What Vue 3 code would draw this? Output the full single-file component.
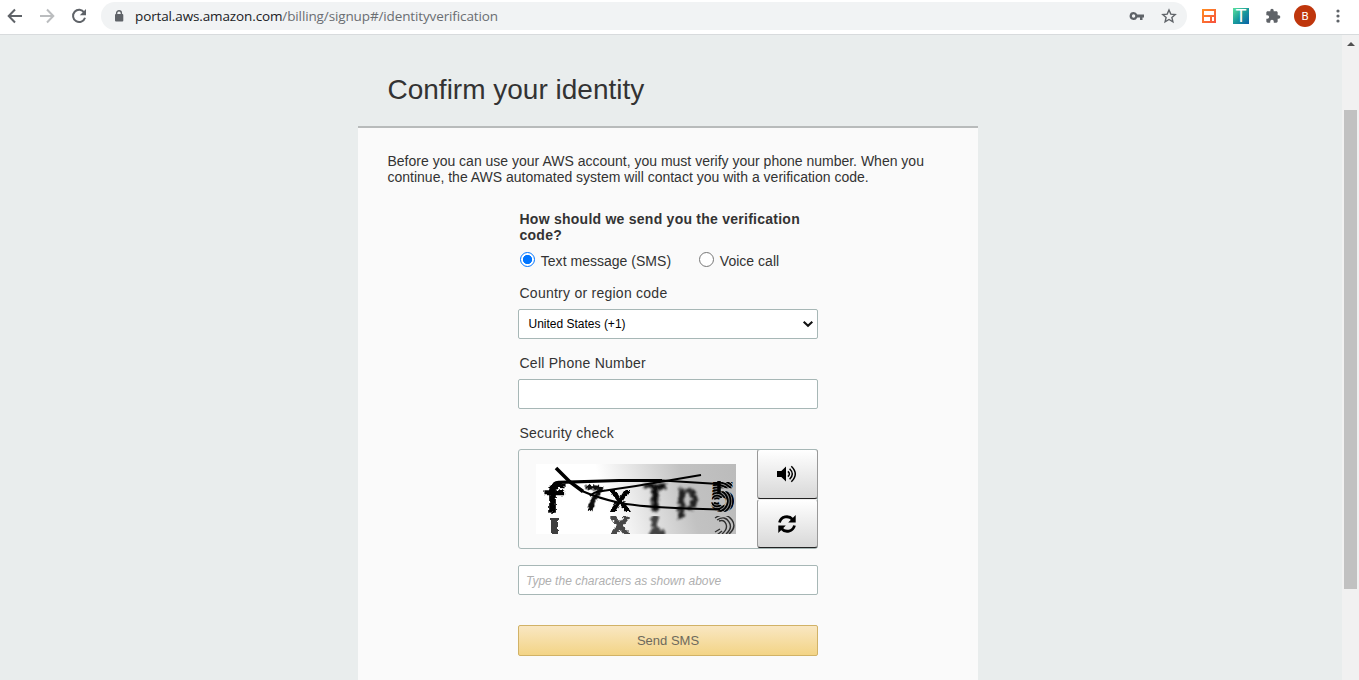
<script setup>
import { ref } from 'vue'

const method = ref('sms')
const country = ref('United States (+1)')
const phone = ref('')
const answer = ref('')
</script>

<template>
  <div class="browser">
    <header class="toolbar">
      <nav class="nav">
        <svg width="16" height="16" viewBox="0 0 16 16"><path d="M15 8H2M8 1.5L1.700 8L8 14.500" fill="none" stroke="#5f6368" stroke-width="2" /></svg>
        <svg width="16" height="16" viewBox="0 0 16 16"><path d="M1 8H14M8 1.500L14.300 8L8 14.500" fill="none" stroke="#bbbdbf" stroke-width="2" /></svg>
        <svg width="16" height="16" viewBox="0 0 16 16"><path d="M13.200 4.500A6.100 6.100 0 1 0 14 9.700" fill="none" stroke="#5f6368" stroke-width="2" /><path d="M15 1V7.200H8.800z" fill="#5f6368" /></svg>
      </nav>
      <div class="address">
        <svg class="lock" width="10" height="12" viewBox="0 0 10 12"><path d="M2.600 5V3.200a2.400 2.400 0 0 1 4.800 0V5" fill="none" stroke="#5f6368" stroke-width="1.400" /><rect x="1" y="4" width="8.300" height="7.500" rx="1" fill="#5f6368" /></svg>
        <span class="url"><b>portal.aws.amazon.com</b>/billing/signup#/identityverification</span>
        <svg class="key" width="16" height="12" viewBox="0 0 16 12"><path fill-rule="evenodd" d="M4.600 2A4 4 0 1 0 8.300 7.500H11V10H13.500V7.500H15V4.500H8.300A4 4 0 0 0 4.600 2zM4.600 4.300a1.700 1.700 0 1 1 0 3.400a1.700 1.700 0 0 1 0-3.400z" fill="#5f6368" /></svg>
        <svg class="star" width="16" height="16" viewBox="0 0 16 16"><path d="M8 2L9.800 6.100L14.200 6.500L10.900 9.400L11.900 13.800L8 11.500L4.100 13.800L5.100 9.400L1.800 6.500L6.200 6.100z" fill="none" stroke="#5f6368" stroke-width="1.400" /></svg>
      </div>
      <div class="extensions">
        <svg class="e1" width="14" height="14" viewBox="0 0 14 14"><defs><linearGradient id="og" x2="1" y2="1"><stop stop-color="#ff8f1f" /><stop offset="1" stop-color="#f75040" /></linearGradient></defs><path fill="url(#og)" fill-rule="evenodd" d="M0 0h14v14H0zM2 2v4h10V2zM2 8v4h6V8zM10 8v4h2V8z" /></svg>
        <span class="tee">T</span>
        <svg class="puzzle" width="16" height="16" viewBox="0 0 24 24"><path d="M20.500 11H19V7c0-1.100-.9-2-2-2h-4V3.500a2.500 2.500 0 0 0-5 0V5H4c-1.100 0-2 .9-2 2v3.800h1.500a2.700 2.700 0 0 1 0 5.400H2V20c0 1.100.9 2 2 2h3.800v-1.500a2.700 2.700 0 0 1 5.400 0V22H17c1.100 0 2-.9 2-2v-4h1.500a2.500 2.500 0 0 0 0-5z" fill="#5f6368" /></svg>
        <span class="avatar">B</span>
        <svg class="dots" width="4" height="14" viewBox="0 0 4 14" fill="#5f6368"><circle cx="2" cy="2" r="1.600" /><circle cx="2" cy="7" r="1.600" /><circle cx="2" cy="12" r="1.600" /></svg>
      </div>
    </header>

    <div class="viewport">
      <main class="page">
        <h1>Confirm your identity</h1>
        <section class="card">
          <p class="intro">
            Before you can use your AWS account, you must verify your phone number. When you<br />
            continue, the AWS automated system will contact you with a verification code.
          </p>
          <form class="form" @submit.prevent>
            <p class="question">How should we send you the verification<br />code?</p>
            <div class="radios">
              <label><input v-model="method" type="radio" value="sms" /><i class="radio"></i><span>Text message (SMS)</span></label>
              <label><input v-model="method" type="radio" value="voice" /><i class="radio"></i><span>Voice call</span></label>
            </div>
            <label class="label" for="country">Country or region code</label>
            <div id="country" class="field select">
              <span>{{ country }}</span>
              <svg width="12" height="8" viewBox="0 0 12 8"><path d="M1.700 1.800L6 5.800L10.300 1.800" fill="none" stroke="#111" stroke-width="2.100" /></svg>
            </div>
            <label class="label cell" for="phone">Cell Phone Number</label>
            <input id="phone" v-model="phone" class="field" type="text" />
            <label class="label sec" for="answer">Security check</label>
            <div class="captcha">
              <svg class="challenge" width="200" height="70" viewBox="0 0 200 70">
                <defs>
                  <linearGradient id="bg" x1="0" y1=".1" x2="1" y2="0"><stop offset=".3" stop-color="#fff" /><stop offset=".72" stop-color="#c2c2c2" /><stop offset="1" stop-color="#bbb" /></linearGradient>
                  <filter id="rough" x="-30%" y="-30%" width="160%" height="160%"><feTurbulence type="fractalNoise" baseFrequency=".35" numOctaves="2" seed="4" /><feDisplacementMap in="SourceGraphic" scale="4" xChannelSelector="R" yChannelSelector="G" /></filter>
                  <filter id="smudge" x="-30%" y="-30%" width="160%" height="160%"><feTurbulence type="fractalNoise" baseFrequency=".3" numOctaves="2" seed="9" /><feDisplacementMap in="SourceGraphic" scale="7" xChannelSelector="R" yChannelSelector="G" /><feGaussianBlur stdDeviation=".9" /></filter>
                  <pattern id="rings" width="200" height="70" patternUnits="userSpaceOnUse">
                    <g fill="none" stroke="#000" stroke-width="1.700"><circle v-for="n in 10" :key="n" cx="181" cy="37" :r="n * 2.700" /></g>
                  </pattern>
                  <clipPath id="lower"><rect y="52" width="200" height="18" /></clipPath>
                </defs>
                <rect width="200" height="70" fill="url(#bg)" />
                <g>
                  <text x="7" y="48" font-size="38" stroke="#000" stroke-width="1.500" filter="url(#rough)">f</text>
                  <text x="46" y="47" font-size="38" transform="rotate(5 54 34)" fill="#111" filter="url(#rough)">7</text>
                  <text x="72" y="48" font-size="40" filter="url(#rough)">x</text>
                  <text x="107" y="47" font-size="40" fill="#111" stroke="#222" filter="url(#smudge)">T</text>
                  <text x="140" y="46" font-size="38" fill="#222" stroke="#333" filter="url(#smudge)">p</text>
                  <text x="174" y="47" font-size="42" fill="#000" opacity=".28">5</text>
                  <text x="174" y="47" font-size="42" fill="url(#rings)" stroke="url(#rings)" stroke-width="2">5</text>
                </g>
                <g clip-path="url(#lower)" opacity=".75">
                  <rect x="15" y="54" width="7" height="20" filter="url(#rough)" />
                  <path d="M76 52L92 72M92 52L76 72" stroke="#111" stroke-width="5" filter="url(#rough)" />
                  <path d="M119 52V72M113 68L129 70" fill="none" stroke="#111" stroke-width="6" filter="url(#smudge)" />
                  <g fill="none" stroke="#000" stroke-width="1.400"><path d="M179 54Q189 47 196 56Q201 63 193 70M181 56Q189 51 193 58Q197 64 190 70M183 57Q188 55 190 60Q192 65 186 70M179 68L184 65M181 71L186 67" /></g>
                </g>
                <g fill="none" stroke="#000">
                  <path d="M20 4L34 18L47 27.500" stroke-width="3.600" />
                  <path d="M46 27Q62 34 84 39Q107 43 150 44.500L184 45.500" stroke-width="2" />
                  <path d="M17 24Q17 18 23 18.300L83 16.500H126" stroke-width="3.200" />
                  <path d="M126 16.500L183 20" stroke-width="2" />
                  <path d="M183 17V30" stroke-width="3.500" />
                  <path d="M54 32Q58 28 63 27.500L100 22L165 11" stroke-width="2" />
                </g>
              </svg>
              <div class="actions">
                <button type="button" aria-label="Audio">
                  <svg width="20" height="18" viewBox="0 0 20 18"><path d="M0 6H4.300L9 1.500V16.500L4.300 12H0z" /><path d="M10.900 6.400Q13.900 9 10.900 11.600M12.600 3.700Q18 9 12.600 14.300M14.300 1.200Q22.300 9 14.300 16.800" fill="none" stroke="#000" stroke-width="1.500" /></svg>
                </button>
                <button type="button" aria-label="Refresh">
                  <svg width="20" height="20" viewBox="0 0 20 20"><path d="M2.500 8.500C4 2.500 11.500 .8 15.600 5.500M17.500 11.500C16 17.500 8.500 19.200 4.400 14.500" fill="none" stroke="#000" stroke-width="2.800" /><path d="M18.700 1V8.500H11.200zM1.300 19V11.500H8.800z" /></svg>
                </button>
              </div>
            </div>
            <input id="answer" v-model="answer" class="field answer" type="text" placeholder="Type the characters as shown above" />
            <button class="send" type="submit">Send SMS</button>
          </form>
        </section>
      </main>
      <aside class="scrollbar"><i class="up"></i><i class="thumb"></i></aside>
    </div>
  </div>
</template>

<style>
body { margin: 0; overflow: hidden; }
</style>

<style scoped>
* { box-sizing: border-box; }
.browser { display: flex; flex-direction: column; width: 1359px; height: 680px; overflow: hidden; font-family: "Liberation Sans", Arial, sans-serif; color: #333; }
.toolbar { height: 35px; flex: none; display: flex; align-items: flex-start; background: #fff; border-bottom: 1px solid #d8dbdd; }
svg { display: block; flex: none; }
.nav { display: flex; gap: 16px; padding: 8px 0 0 7px; width: 101px; }
.address { width: 1086px; height: 28px; margin-top: 2px; border-radius: 14px; background: #f1f3f4; display: flex; align-items: center; padding-left: 13px; }
.lock { margin-bottom: 1px; }
.url { margin-left: 11px; width: 380px; font: 13.5px/20px "Open Sans", sans-serif; color: #6a6e72; white-space: nowrap; letter-spacing: -.125px; }
.url b { font-weight: 400; color: #202124; }
.key { margin-left: 614px; }
.star { margin-left: 16px; }
.extensions { display: flex; height: 32px; align-items: center; padding-left: 15px; }
.e1 { margin-right: 1px; }
.tee { width: 16px; height: 16px; margin-left: 16px; background: linear-gradient(135deg, #5ce29a, #199b9c 50%, #0960a7); color: #fff; font: 18px/17px "Liberation Sans", sans-serif; text-align: center; }
.puzzle { margin-left: 16px; }
.avatar { width: 22px; height: 22px; margin-left: 13px; border-radius: 50%; background: #bf360c; color: #fff; font: 11.5px/22px Roboto, sans-serif; text-align: center; }
.dots { margin-left: 20px; }
.viewport { flex: 1; min-height: 0; display: flex; background: #e9eded; }
.page { flex: 1; padding-left: 358px; overflow: hidden; }
h1 { margin: 0; height: 91px; padding: 39px 0 0 29.5px; font-size: 28px; line-height: 32px; font-weight: 400; white-space: nowrap; }
.card { width: 620px; height: 700px; border-top: 2px solid #b8bbbb; background: #fafafa; padding-top: 25px; }
.intro { margin: 0 0 0 29.5px; font-size: 14px; line-height: 16px; white-space: nowrap; }
.form { width: 300px; margin: 26px 0 0 160px; }
.question { margin: 0 0 0 1.5px; font-size: 14px; line-height: 16px; font-weight: 700; letter-spacing: .25px; white-space: nowrap; }
.radios { display: flex; margin-top: 8px; height: 20px; font-size: 14px; line-height: 20px; letter-spacing: .02px; white-space: nowrap; }
.radios label { display: flex; flex: none; width: 179px; padding-left: 2px; }
.radios input { appearance: none; width: 0; height: 0; margin: 0; }
.radio { width: 15px; height: 15px; margin: 1px 5.8px 0 0; border: 1px solid #767676; border-radius: 50%; background: #fff; flex: none; }
input:checked + .radio { border-color: #0075ff; background: radial-gradient(circle, #0075ff 4.3px, #fff 5px); }
.label { display: block; margin: 14px 0 0 1.5px; font-size: 14px; line-height: 16px; letter-spacing: .25px; }
.field { display: flex; width: 300px; height: 30px; margin: 8px 0 0; border: 1px solid #a7b7b6; border-radius: 2px; background: #fff; padding: 0 7px; font: 12px/28px "Liberation Sans", Arial, sans-serif; outline: 0; }
.select { align-items: center; justify-content: space-between; padding: 0 3px 0 9.5px; color: #000; }
.label.cell, .label.sec { margin-top: 16px; }
.captcha { width: 300px; height: 100px; margin-top: 8px; border: 1px solid #a7b7b6; border-radius: 3px; display: flex; justify-content: space-between; }
.challenge { margin: 14px 0 0 17px; font-family: "Liberation Mono", monospace; font-weight: 700; }
.actions { width: 61px; margin: -1px -1px 0 0; display: flex; flex-direction: column; }
.actions button { width: 61px; height: 50px; display: flex; align-items: center; justify-content: center; padding: 0 1px 0 0; border: 1px solid #999; border-top-color: #a7b7b6; border-bottom-color: #222; border-radius: 3px; background: linear-gradient(#fff, #d8d8d8); }
.actions button + button { height: 49px; border-top-color: #eee; }
.field.answer { margin-top: 16px; padding-top: 1px; }
.answer::placeholder { color: #b0b0b0; font-style: italic; opacity: 1; }
.send { display: block; width: 300px; height: 31px; margin-top: 30px; padding: 0; border: 1px solid #d1b266; border-radius: 2px; background: linear-gradient(#f9e7c2, #f3d486); font: 13px/28px "Liberation Sans", Arial, sans-serif; color: #6e6a5d; }
.scrollbar { width: 17px; background: #f1f1f1; display: flex; flex-direction: column; align-items: center; }
.up { margin-top: 7px; border: 4px solid transparent; border-top: 0; border-bottom: 4px solid #505050; }
.thumb { width: 13px; height: 479px; margin-top: 64px; background: #c1c1c1; }
</style>
